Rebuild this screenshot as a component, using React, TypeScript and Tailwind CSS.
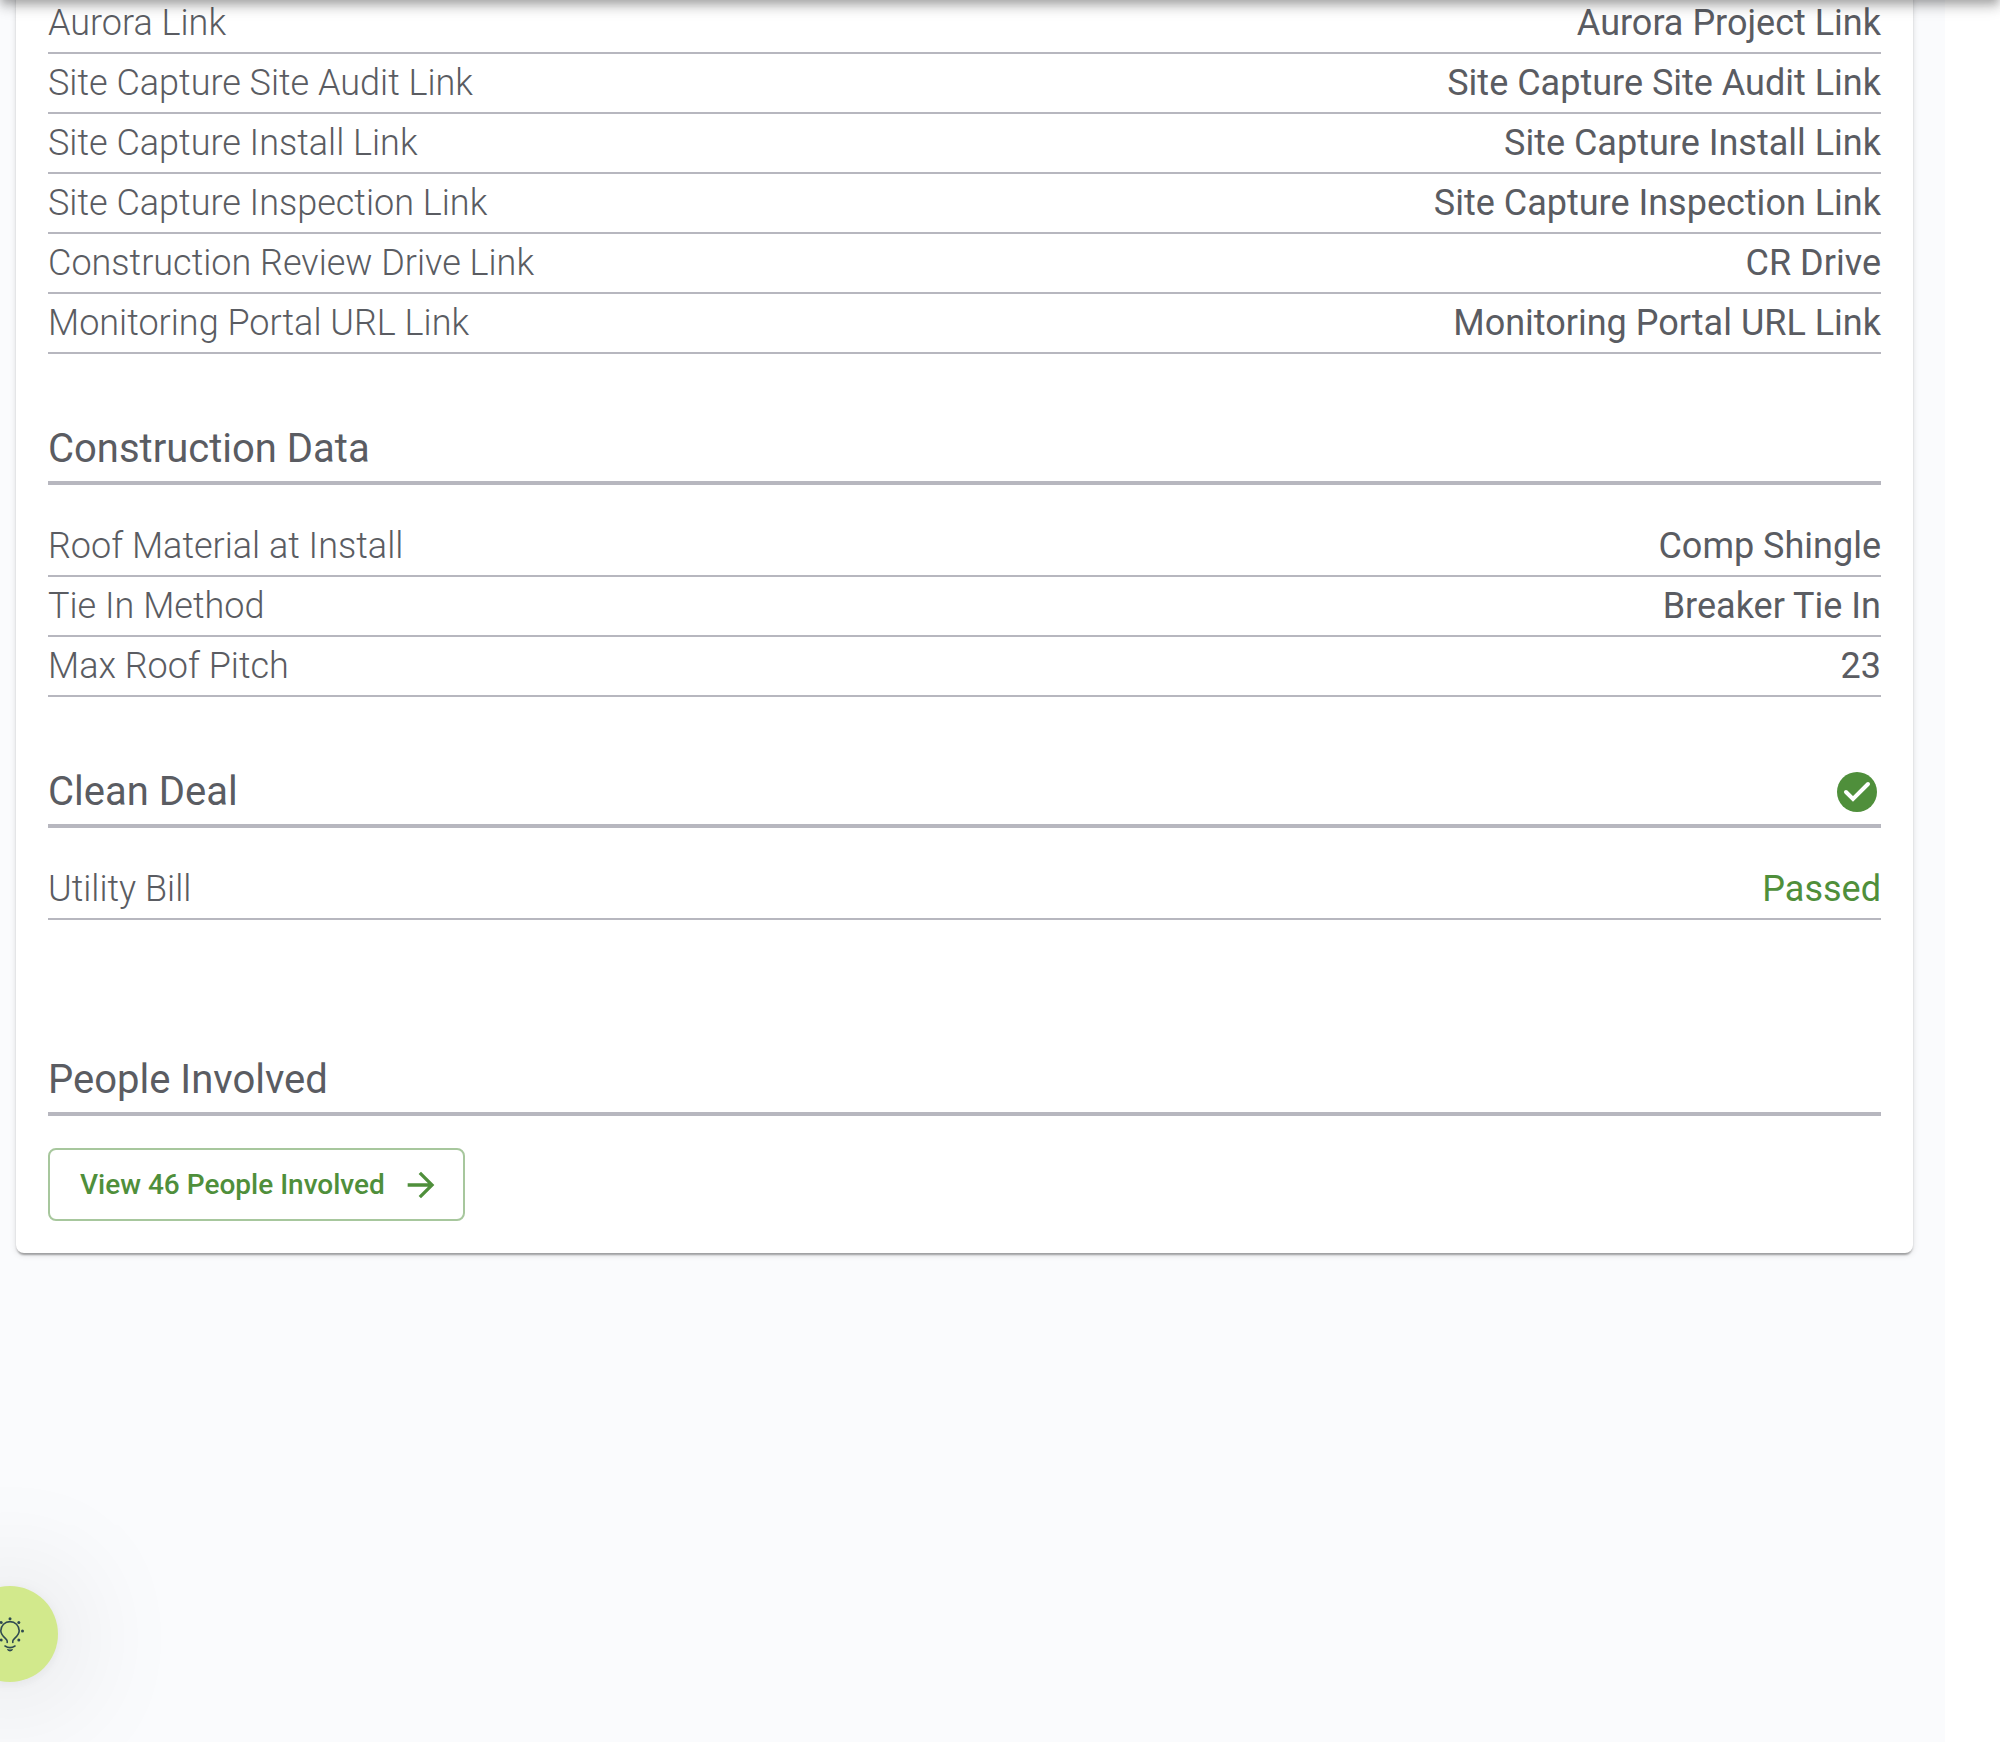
import React from "react";

type Item = { label: string; value: string; href?: string; good?: boolean };

const links: Item[] = [
  { label: "Aurora Link", value: "Aurora Project Link", href: "#aurora" },
  { label: "Site Capture Site Audit Link", value: "Site Capture Site Audit Link", href: "#site-audit" },
  { label: "Site Capture Install Link", value: "Site Capture Install Link", href: "#install" },
  { label: "Site Capture Inspection Link", value: "Site Capture Inspection Link", href: "#inspection" },
  { label: "Construction Review Drive Link", value: "CR Drive", href: "#cr-drive" },
  { label: "Monitoring Portal URL Link", value: "Monitoring Portal URL Link", href: "#monitoring" },
];

const construction: Item[] = [
  { label: "Roof Material at Install", value: "Comp Shingle" },
  { label: "Tie In Method", value: "Breaker Tie In" },
  { label: "Max Roof Pitch", value: "23" },
];

const cleanDeal: Item[] = [{ label: "Utility Bill", value: "Passed", good: true }];

function Rows({ items }: { items: Item[] }) {
  return (
    <dl>
      {items.map((it) => (
        <div
          key={it.label}
          className="flex h-[60px] items-center justify-between border-b-2 border-[#b7b7bf] text-[36px] leading-[58px]"
        >
          <dt className="font-light">{it.label}</dt>
          <dd className={it.good ? "text-[#4f8f3b]" : ""}>
            {it.href ? <a href={it.href}>{it.value}</a> : it.value}
          </dd>
        </div>
      ))}
    </dl>
  );
}

function Heading({ title, children }: { title: string; children?: React.ReactNode }) {
  return (
    <div className="mt-[63px] flex items-center justify-between border-b-4 border-[#b7b7bf]">
      <h2 className="text-[40px] leading-[64px]">{title}</h2>
      {children}
    </div>
  );
}

function CheckIcon() {
  return (
    <svg className="size-12" viewBox="0 0 48 48" role="img" aria-label="Passed">
      <circle cx="24" cy="24" r="20" fill="#4f8f3b" />
      <path
        d="M13 24l7 7L35 16"
        fill="none"
        stroke="#fff"
        strokeWidth="4"
        strokeLinecap="round"
        strokeLinejoin="miter"
      />
    </svg>
  );
}

function BulbIcon() {
  return (
    <svg className="size-10" viewBox="0 0 40 40" aria-hidden="true">
      <g fill="none" stroke="#2f4a50" strokeWidth="1.6" strokeLinecap="round">
        <path d="M17.200 28.500v-1.500c0-2-6.400-5-6.400-10.200a9.200 9.200 0 0 1 18.400 0c0 5.200-6.400 8.200-6.400 10.200v1.500" />
        <path d="M15 32c3 2 7 2 10 0" />
      </g>
      <g fill="#2f4a50">
        <path d="M16.800 34.800q3.200 1.400 6.400 0q-.6 2.600-3.200 2.600t-3.200-2.600z" />
        <circle cx="20" cy="4.700" r="1.500" />
        <circle cx="11.200" cy="8.400" r="1.500" />
        <circle cx="28.800" cy="8.400" r="1.500" />
        <circle cx="7.500" cy="17" r="1.500" />
        <circle cx="32.500" cy="17" r="1.500" />
        <circle cx="11.200" cy="26" r="1.500" />
        <circle cx="28.800" cy="26" r="1.500" />
      </g>
    </svg>
  );
}

export default function App() {
  return (
    <div className="relative min-h-screen overflow-hidden bg-white font-['Roboto',sans-serif] text-[#5a5c62]">
      <main className="mr-[55px] flow-root min-h-screen bg-[#fafbfd] pl-4 pr-8">
        <section className="-mt-[6px] rounded-b-lg bg-white px-8 pb-8 shadow-[0_4px_2px_-2px_rgba(0,0,0,0.2),0_2px_2px_0_rgba(0,0,0,0.14),0_2px_6px_0_rgba(0,0,0,0.12)]">
          <Rows items={links} />
          <Heading title="Construction Data" />
          <div className="pt-8">
            <Rows items={construction} />
          </div>
          <Heading title="Clean Deal">
            <CheckIcon />
          </Heading>
          <div className="pb-[65px] pt-8">
            <Rows items={cleanDeal} />
          </div>
          <Heading title="People Involved" />
          <button
            type="button"
            className="mt-8 flex h-[73px] items-center gap-4 rounded-lg border-2 border-[#a7c79d] pl-[30px] pr-[22px] text-[28px] font-medium text-[#4f8f3b]"
          >
            View 46 People Involved
            <svg className="size-10" viewBox="0 0 24 24" fill="currentColor" aria-hidden="true">
              <path d="m12 4-1.410 1.410L16.170 11H4v2h12.170l-5.580 5.590L12 20l8-8z" />
            </svg>
          </button>
        </section>
      </main>
      {/* App bar scrolled just out of view; only its elevation shadow shows */}
      <div className="pointer-events-none absolute inset-x-0 bottom-full h-16 shadow-[0_4px_8px_-2px_rgba(0,0,0,0.2),0_8px_10px_0_rgba(0,0,0,0.14),0_2px_20px_0_rgba(0,0,0,0.12)]" />
      <button
        type="button"
        aria-label="Tips"
        className="absolute bottom-[60px] -left-[38px] flex size-24 items-center justify-center rounded-full bg-[#d2e98c] shadow-[0_2px_12px_rgba(0,0,0,0.06),0_4px_128px_rgba(0,0,0,0.18)]"
      >
        <BulbIcon />
      </button>
    </div>
  );
}
